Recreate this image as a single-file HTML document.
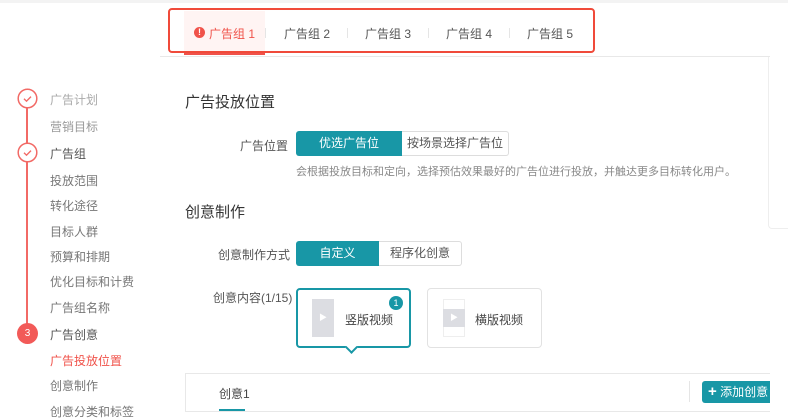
<!DOCTYPE html>
<html><head><meta charset="utf-8"><style>
*{margin:0;padding:0;box-sizing:border-box}
body{width:788px;height:414px;overflow:hidden;background:#fff;font-family:"Liberation Sans","Noto Sans CJK SC",sans-serif;position:relative;color:#333}
.a{position:absolute;white-space:nowrap}
.t{font-size:12px;color:#555}
.s{font-size:12px;color:#777}
.teal{background:#1897a6;color:#fff}
</style></head><body>
<div class="a" style="left:0;top:0;width:788px;height:3px;background:#f3f3f3"></div>
<div class="a" style="left:184px;top:11px;width:81px;height:44px;background:#fff4f3"></div>
<div class="a" style="left:184px;top:52px;width:81px;height:3px;background:#f0524a"></div>
<div class="a" style="left:160px;top:56px;width:610px;height:1px;background:#e8e8e8"></div>
<div class="a" style="left:168px;top:8px;width:427px;height:45px;border:2px solid #f04a3a;border-radius:4px"></div>
<div class="a" style="left:194px;top:27px;width:11px;height:11px;border-radius:50%;background:#f0524a;color:#fff;font-size:9px;line-height:11px;text-align:center;font-weight:bold">!</div>
<div class="a" style="left:209px;top:25px;font-size:12px;color:#f0524a">广告组 1</div>
<div class="a t" style="left:284px;top:25px">广告组 2</div>
<div class="a t" style="left:365px;top:25px">广告组 3</div>
<div class="a t" style="left:446px;top:25px">广告组 4</div>
<div class="a t" style="left:527px;top:25px">广告组 5</div>
<div class="a" style="left:265px;top:28px;width:1px;height:10px;background:#e5e5e5"></div>
<div class="a" style="left:347px;top:28px;width:1px;height:10px;background:#e5e5e5"></div>
<div class="a" style="left:428px;top:28px;width:1px;height:10px;background:#e5e5e5"></div>
<div class="a" style="left:509px;top:28px;width:1px;height:10px;background:#e5e5e5"></div>
<div class="a" style="left:768px;top:57px;width:20px;height:172px;border-left:1px solid #eee;border-bottom:1px solid #eee;border-radius:0 0 0 4px"></div>

<div class="a" style="left:26px;top:108px;width:2px;height:216px;background:#f26a66"></div>
<svg class="a" style="left:17px;top:88px" width="21" height="21"><circle cx="10.5" cy="10.5" r="9.3" fill="#fff" stroke="#f26a66" stroke-width="1.5"/><path d="M7 10.8l2.5 2.4 4.5-4.6" fill="none" stroke="#f26a66" stroke-width="1.4"/></svg>
<svg class="a" style="left:17px;top:142px" width="21" height="21"><circle cx="10.5" cy="10.5" r="9.3" fill="#fff" stroke="#f26a66" stroke-width="1.5"/><path d="M7 10.8l2.5 2.4 4.5-4.6" fill="none" stroke="#f26a66" stroke-width="1.4"/></svg>
<div class="a" style="left:17px;top:323px;width:21px;height:21px;border-radius:50%;background:#f25a58;color:#fff;font-size:10px;line-height:21px;text-align:center">3</div>
<div class="a s" style="left:50px;top:91px;color:#aaa">广告计划</div>
<div class="a s" style="left:50px;top:118px;color:#999">营销目标</div>
<div class="a s" style="left:50px;top:145px;color:#555">广告组</div>
<div class="a s" style="left:50px;top:172px">投放范围</div>
<div class="a s" style="left:50px;top:197px">转化途径</div>
<div class="a s" style="left:50px;top:223px">目标人群</div>
<div class="a s" style="left:50px;top:248px">预算和排期</div>
<div class="a s" style="left:50px;top:273px">优化目标和计费</div>
<div class="a s" style="left:50px;top:299px">广告组名称</div>
<div class="a s" style="left:50px;top:326px;color:#555">广告创意</div>
<div class="a s" style="left:50px;top:352px;color:#f0524a">广告投放位置</div>
<div class="a s" style="left:50px;top:377px">创意制作</div>
<div class="a s" style="left:50px;top:403px">创意分类和标签</div>

<div class="a" style="left:185px;top:91px;font-size:15px;color:#333">广告投放位置</div>
<div class="a t" style="left:240px;top:137px">广告位置</div>
<div class="a teal" style="left:296px;top:131px;width:106px;height:25px;border-radius:3px 0 0 3px;font-size:12px;line-height:25px;text-align:center">优选广告位</div>
<div class="a t" style="left:402px;top:131px;width:107px;height:25px;border:1px solid #ddd;border-left:none;border-radius:0 3px 3px 0;line-height:23px;text-align:center">按场景选择广告位</div>
<div class="a" style="left:296px;top:163px;font-size:11px;color:#888">会根据投放目标和定向，选择预估效果最好的广告位进行投放，并触达更多目标转化用户。</div>
<div class="a" style="left:185px;top:201px;font-size:15px;color:#333">创意制作</div>
<div class="a t" style="left:218px;top:246px">创意制作方式</div>
<div class="a teal" style="left:296px;top:241px;width:83px;height:25px;border-radius:3px 0 0 3px;font-size:12px;line-height:25px;text-align:center">自定义</div>
<div class="a t" style="left:379px;top:241px;width:83px;height:25px;border:1px solid #ddd;border-left:none;border-radius:0 3px 3px 0;line-height:23px;text-align:center">程序化创意</div>
<div class="a t" style="left:213px;top:289px">创意内容(1/15)</div>

<div class="a" style="left:296px;top:288px;width:115px;height:60px;border:2px solid #1897a6;border-radius:4px;background:#fff"></div>
<div class="a" style="left:347px;top:343px;width:9px;height:9px;background:#fff;border-right:2px solid #1897a6;border-bottom:2px solid #1897a6;transform:rotate(45deg)"></div>
<div class="a" style="left:312px;top:299px;width:22px;height:38px;background:#dcdde2;color:#fff;font-size:8px;line-height:38px;text-align:center">▶</div>
<div class="a t" style="left:345px;top:311px;color:#444">竖版视频</div>
<div class="a" style="left:389px;top:296px;width:14px;height:14px;border-radius:50%;background:#1897a6;color:#fff;font-size:9px;line-height:14px;text-align:center">1</div>
<div class="a" style="left:427px;top:288px;width:115px;height:60px;border:1px solid #e2e2e2;border-radius:4px"></div>
<div class="a" style="left:443px;top:299px;width:22px;height:38px;border:1px solid #eee"></div>
<div class="a" style="left:443px;top:309px;width:22px;height:18px;background:#dcdde2;color:#fff;font-size:8px;line-height:18px;text-align:center">▶</div>
<div class="a t" style="left:475px;top:311px;color:#444">横版视频</div>

<div class="a" style="left:185px;top:373px;width:585px;height:39px;border:1px solid #e8e8e8;border-right:none"></div>
<div class="a t" style="left:219px;top:385px;color:#444">创意1</div>
<div class="a" style="left:219px;top:409px;width:26px;height:2px;background:#1897a6"></div>
<div class="a" style="left:689px;top:381px;width:1px;height:21px;background:#e5e5e5"></div>
<div class="a teal" style="left:702px;top:381px;width:68px;height:22px;border-radius:3px 0 0 3px;font-size:12px;line-height:22px;padding-left:6px"><span style="font-size:15px;font-weight:bold">+</span> 添加创意</div>
</body></html>
